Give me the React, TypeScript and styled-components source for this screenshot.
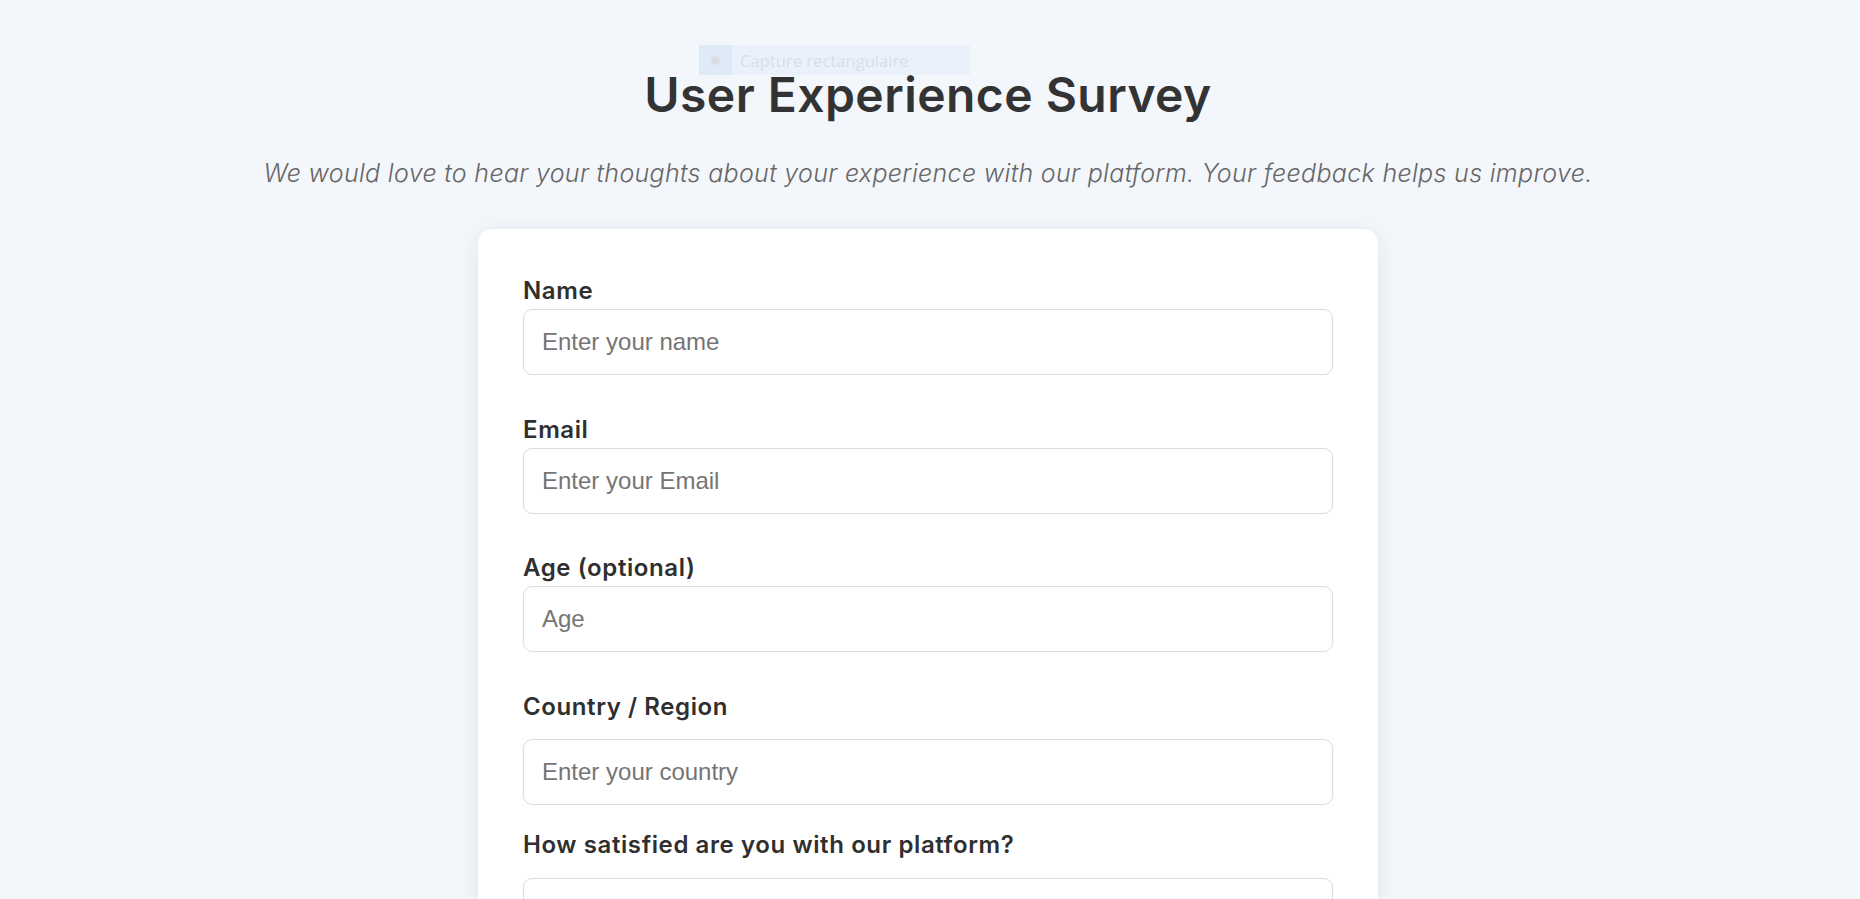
import React from "react";
import styled, { createGlobalStyle } from "styled-components";

const GlobalStyle = createGlobalStyle`
  html {
    scrollbar-width: none;
  }
  html::-webkit-scrollbar { display: none; }
  body {
    margin: 0;
    background: #f3f6fa;
    font-family: "Inter", "Noto Sans", sans-serif;
    color: #333333;
  }
  * { box-sizing: border-box; }
`;

const Page = styled.main`
  position: relative;
  display: flex;
  flex-direction: column;
  align-items: center;
  padding: 66px 24px 60px 20px;
`;

const Title = styled.h1`
  margin: 0;
  font-family: "Inter", "Noto Sans", sans-serif;
  font-weight: 600;
  font-size: 48px;
  line-height: 58px;
  letter-spacing: 0.45px;
  color: #333333;
  text-align: center;
`;

const Subtitle = styled.p`
  margin: 31px 0 38px;
  font-family: "Inter", "Noto Sans", sans-serif;
  font-style: italic;
  font-weight: 300;
  font-size: 25px;
  line-height: 36px;
  letter-spacing: 0.32px;
  color: #666666;
  text-align: center;
`;

const Card = styled.form`
  width: 900px;
  background: #ffffff;
  border-radius: 15px;
  padding: 45px;
  box-shadow: 0 4px 24px rgba(30, 50, 90, 0.08);
  display: flex;
  flex-direction: column;
`;

const Group = styled.div<{ $gap?: number }>`
  display: flex;
  flex-direction: column;
  margin-bottom: ${(p) => (p.$gap ?? 37.5)}px;
`;

const Label = styled.label<{ $space?: number }>`
  display: block;
  font-family: "Inter", "Noto Sans", sans-serif;
  font-weight: 600;
  font-size: 24px;
  line-height: 34px;
  letter-spacing: 0.6px;
  color: #2f2f2f;
  margin-bottom: ${(p) => (p.$space ?? 1)}px;
`;

const Input = styled.input`
  width: 100%;
  height: 66px;
  padding: 0 18px;
  border: 1px solid #dcdcdc;
  border-radius: 9px;
  font-family: "Liberation Sans", Arial, sans-serif;
  font-size: 24px;
  color: #333;
  background: #fff;
  outline: none;
  &::placeholder {
    color: #757575;
  }
`;

const Select = styled.select`
  width: 100%;
  height: 66px;
  padding: 0 18px;
  border: 1px solid #dcdcdc;
  border-radius: 9px;
  font-family: "Liberation Sans", Arial, sans-serif;
  font-size: 24px;
  color: #333;
  background: #fff;
  appearance: none;
`;

const TextArea = styled.textarea`
  width: 100%;
  height: 160px;
  padding: 18px;
  border: 1px solid #dcdcdc;
  border-radius: 9px;
  font-family: "Liberation Sans", Arial, sans-serif;
  font-size: 24px;
  resize: none;
`;

const Submit = styled.button`
  height: 66px;
  border: none;
  border-radius: 9px;
  background: #4a6cf7;
  color: #fff;
  font-family: "Inter", sans-serif;
  font-weight: 600;
  font-size: 22px;
`;

const SnipTip = styled.div`
  position: absolute;
  left: 699px;
  top: 45px;
  width: 271px;
  height: 30px;
  display: flex;
  align-items: center;
  background: rgba(226, 236, 250, 0.55);
  pointer-events: none;
`;

const SnipIcon = styled.span`
  width: 33px;
  height: 100%;
  display: flex;
  align-items: center;
  justify-content: center;
  background: rgba(214, 228, 248, 0.55);
  &::after {
    content: "";
    width: 9px;
    height: 9px;
    border-radius: 50%;
    background: #d9dee6;
  }
`;

const SnipText = styled.span`
  margin-left: 8px;
  font-family: "Open Sans", "Noto Sans", sans-serif;
  font-size: 16.6px;
  color: #d8dfe8;
  white-space: nowrap;
`;

export default function App() {
  return (
    <>
      <GlobalStyle />
      <Page>
        <SnipTip>
          <SnipIcon />
          <SnipText>Capture rectangulaire</SnipText>
        </SnipTip>
        <Title>User Experience Survey</Title>
        <Subtitle>
          We would love to hear your thoughts about your experience with our platform. Your feedback helps us improve.
        </Subtitle>
        <Card onSubmit={(e) => e.preventDefault()}>
          <Group>
            <Label htmlFor="name">Name</Label>
            <Input id="name" placeholder="Enter your name" />
          </Group>
          <Group>
            <Label htmlFor="email">Email</Label>
            <Input id="email" type="email" placeholder="Enter your Email" />
          </Group>
          <Group>
            <Label htmlFor="age">Age (optional)</Label>
            <Input id="age" type="number" placeholder="Age" />
          </Group>
          <Group $gap={23}>
            <Label htmlFor="country" $space={15}>Country / Region</Label>
            <Input id="country" placeholder="Enter your country" />
          </Group>
          <Group>
            <Label htmlFor="satisfaction" $space={16}>How satisfied are you with our platform?</Label>
            <Select id="satisfaction" defaultValue="">
              <option value="" disabled>Select an option</option>
              <option>Very satisfied</option>
              <option>Satisfied</option>
              <option>Neutral</option>
              <option>Dissatisfied</option>
            </Select>
          </Group>
          <Group>
            <Label htmlFor="comments">Any additional comments?</Label>
            <TextArea id="comments" placeholder="Your comments" />
          </Group>
          <Submit type="submit">Submit</Submit>
        </Card>
      </Page>
    </>
  );
}
